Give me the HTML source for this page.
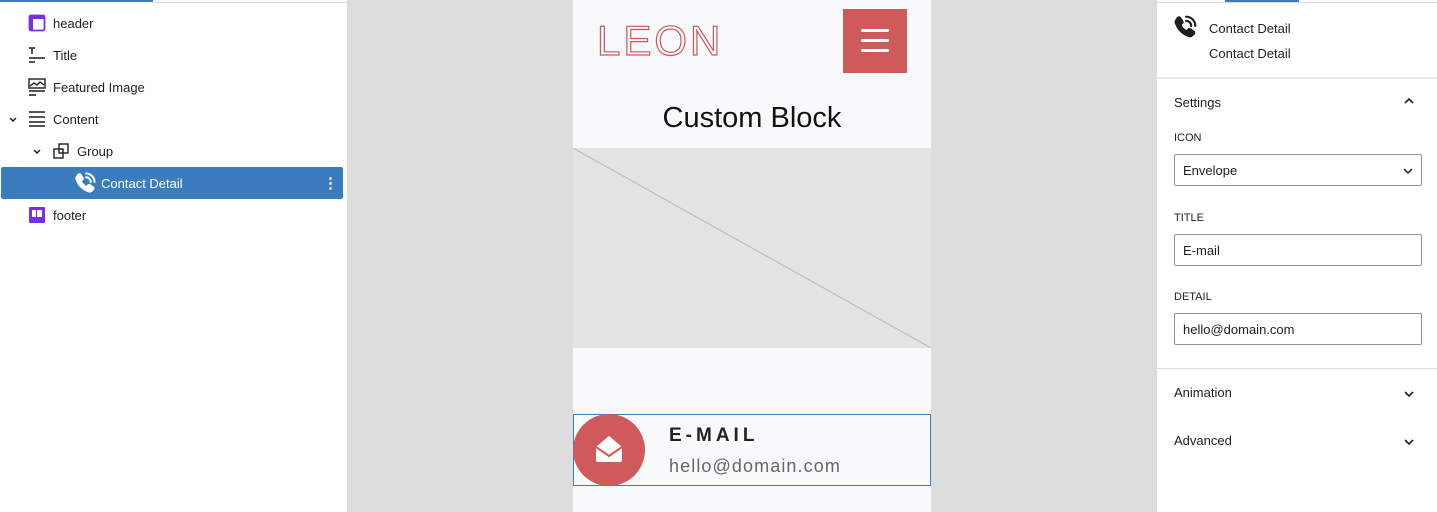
<!DOCTYPE html>
<html><head><style>
*{box-sizing:border-box;margin:0;padding:0}
body{width:1437px;height:512px;overflow:hidden;font-family:"Liberation Sans",sans-serif;background:#ddd;position:relative;color:#1e1e1e}
.abs{position:absolute}
#left{left:0;top:0;width:348px;height:512px;background:#fff;border-right:1px solid #ddd}
.row{position:absolute;left:0;height:32px;width:343px;font-size:13px;display:flex;align-items:center}
.row span{position:absolute}
#right{left:1156px;top:0;width:281px;height:512px;background:#fff;border-left:1px solid #ddd}
.lbl{font-size:11px;position:absolute;left:17px}
.inp{position:absolute;left:17px;width:248px;height:32px;border:1px solid #949494;border-radius:2px;font-size:13px;padding:8px 8px}
</style></head><body>
<svg width="0" height="0" style="position:absolute"><defs><symbol id="ph" viewBox="0 0 24 24"><path d="M5 3.2c.9-.9 2.2-.8 2.9.2l2 3c.6.9.4 2-.4 2.6L8.2 10c1.1 2.4 3 4.3 5.4 5.5l1-1.3c.6-.8 1.7-1 2.600-.4l3 2c1 .7 1.1 2 .2 2.9l-1.3 1.3c-1 1-2.5 1.3-3.8.8C9.3 18.6 5.2 14.5 3.1 8.6c-.5-1.3-.1-2.8.9-3.8z"/><path d="M13 2.5a8.5 8.5 0 0 1 8.5 8.5M13 6.3a4.7 4.7 0 0 1 4.7 4.7" fill="none" stroke-width="2" stroke-linecap="round"/></symbol></defs></svg>
<div id="left" class="abs">
 <div class="abs" style="left:0;top:0;width:153px;height:2px;background:#3a7cbd"></div>
 <div class="abs" style="left:153px;top:2px;width:195px;height:1px;background:#ddd"></div>
 <div class="row" style="top:7px"><svg class="abs" style="left:28px" width="18" height="18"><rect x="1.5" y="1.5" width="15" height="15" rx="1.5" fill="none" stroke="#7a2ee6" stroke-width="1.8"/><rect x="1.5" y="1.5" width="15" height="3.5" fill="#7a2ee6"/><rect x="1.5" y="1.5" width="3.5" height="15" fill="#7a2ee6"/></svg><span style="left:53px">header</span></div>
 <div class="row" style="top:39px"><svg class="abs" style="left:28px" width="18" height="18" stroke="#1e1e1e" stroke-width="1.5"><path d="M1 2h6M4 2v6M1 12h16M1 16h6"/></svg><span style="left:53px">Title</span></div>
 <div class="row" style="top:71px"><svg class="abs" style="left:28px" width="18" height="18" stroke="#1e1e1e" stroke-width="1.4" fill="none"><rect x="1" y="1" width="16" height="9"/><path d="M2 8l4-3 3 2 3-3 4 3M1 13h16M1 17h7"/></svg><span style="left:53px">Featured Image</span></div>
 <div class="row" style="top:103px"><svg class="abs" style="left:8px" width="10" height="10" stroke="#1e1e1e" stroke-width="1.5" fill="none"><path d="M2 4l3 3 3-3"/></svg><svg class="abs" style="left:28px" width="18" height="18" stroke="#1e1e1e" stroke-width="1.5"><path d="M1 2h16M1 7h16M1 12h16M1 16h16"/></svg><span style="left:53px">Content</span></div>
 <div class="row" style="top:135px"><svg class="abs" style="left:32px" width="10" height="10" stroke="#1e1e1e" stroke-width="1.5" fill="none"><path d="M2 4l3 3 3-3"/></svg><svg class="abs" style="left:53px" width="17" height="17" stroke="#1e1e1e" stroke-width="1.4" fill="none"><rect x="1" y="6" width="9" height="9"/><rect x="6" y="1" width="9" height="9"/></svg><span style="left:77px">Group</span></div>
 <div class="row" style="top:167px;left:1px;width:342px;background:#3a7cbd;color:#fff;border-radius:2px"><svg class="abs" style="left:72px;top:4px" width="24" height="24" fill="#fff" stroke="#fff"><use href="#ph"/></svg><span style="left:100px">Contact Detail</span><span style="left:322px;font-weight:bold;font-size:15px">⋮</span></div>
 <div class="row" style="top:199px"><svg class="abs" style="left:28px" width="18" height="18"><rect x="1" y="1" width="16" height="16" rx="1" fill="#7a2ee6"/><rect x="4" y="4" width="4" height="7" fill="#fff"/><rect x="9" y="4" width="5" height="7" fill="#fff"/></svg><span style="left:53px">footer</span></div>
</div>

<div class="abs" style="left:573px;top:0;width:358px;height:512px;background:#f8f9fb">
 <div class="abs" style="left:24px;top:17px;font-size:42px;font-weight:normal;letter-spacing:3px;color:transparent;-webkit-text-stroke:1.2px #d0585a;line-height:48px">LEON</div>
 <div class="abs" style="left:270px;top:9px;width:64px;height:64px;background:#cf5a5b">
  <div class="abs" style="left:18px;top:20px;width:28px;height:3px;background:#fff;border-radius:2px"></div>
  <div class="abs" style="left:18px;top:30px;width:28px;height:3px;background:#fff;border-radius:2px"></div>
  <div class="abs" style="left:18px;top:40px;width:28px;height:3px;background:#fff;border-radius:2px"></div>
 </div>
 <div class="abs" style="left:0;width:358px;top:102px;text-align:center;font-size:29px;color:#111">Custom Block</div>
 <svg class="abs" style="left:0;top:148px" width="358" height="200"><rect width="358" height="200" fill="#e3e3e3"/><line x1="0" y1="0" x2="358" y2="200" stroke="#b8b8b8"/></svg>
 <div class="abs" style="left:0;top:414px;width:358px;height:72px;border:1px solid #3a7cbd"></div>
 <div class="abs" style="left:0;top:414px;width:72px;height:72px;border-radius:50%;background:#cf5a5b"></div>
 <svg class="abs" style="left:20px;top:432px" width="32" height="34"><path d="M3 15L16 4 29 15v13a2 2 0 0 1-2 2H5a2 2 0 0 1-2-2z" fill="#fff"/><path d="M3 15l13 9 13-9" fill="none" stroke="#cf5a5b" stroke-width="2"/></svg>
 <div class="abs" style="left:96px;top:425px;font-size:19px;font-weight:bold;letter-spacing:4px;color:#222">E-MAIL</div>
 <div class="abs" style="left:96px;top:456px;font-size:18px;color:#666;letter-spacing:1.1px">hello@domain.com</div>
</div>

<div id="right" class="abs">
 <div class="abs" style="left:68px;top:0;width:74px;height:2px;background:#3a7cbd"></div>
 <div class="abs" style="left:0;top:2px;width:281px;height:1px;background:#ddd"></div>
 <svg class="abs" style="left:15px;top:14px" width="26" height="26" fill="#1e1e1e" stroke="#1e1e1e"><use href="#ph"/></svg>
 <div class="abs" style="left:52px;top:21px;font-size:13px">Contact Detail</div>
 <div class="abs" style="left:52px;top:46px;font-size:13px">Contact Detail</div>
 <div class="abs" style="left:0;top:77px;width:281px;height:2px;background:#e8e8e8"></div>
 <div class="abs" style="left:17px;top:95px;font-size:13px">Settings</div>
 <svg class="abs" style="left:246px;top:96px" width="12" height="10" stroke="#1e1e1e" stroke-width="1.6" fill="none"><path d="M2 7l4-4 4 4"/></svg>
 <div class="lbl" style="top:132px">ICON</div>
 <div class="inp" style="top:154px">Envelope<svg class="abs" style="right:8px;top:12px" width="10" height="8" stroke="#1e1e1e" stroke-width="1.5" fill="none"><path d="M1 2l4 4 4-4"/></svg></div>
 <div class="lbl" style="top:212px">TITLE</div>
 <div class="inp" style="top:234px">E-mail</div>
 <div class="lbl" style="top:291px">DETAIL</div>
 <div class="inp" style="top:313px">hello@domain.com</div>
 <div class="abs" style="left:0;top:368px;width:281px;height:1px;background:#e0e0e0"></div>
 <div class="abs" style="left:17px;top:385px;font-size:13px">Animation</div>
 <svg class="abs" style="left:246px;top:389px" width="12" height="10" stroke="#1e1e1e" stroke-width="1.6" fill="none"><path d="M2 3l4 4 4-4"/></svg>
 <div class="abs" style="left:17px;top:433px;font-size:13px">Advanced</div>
 <svg class="abs" style="left:246px;top:437px" width="12" height="10" stroke="#1e1e1e" stroke-width="1.6" fill="none"><path d="M2 3l4 4 4-4"/></svg>
</div>
</body></html>
